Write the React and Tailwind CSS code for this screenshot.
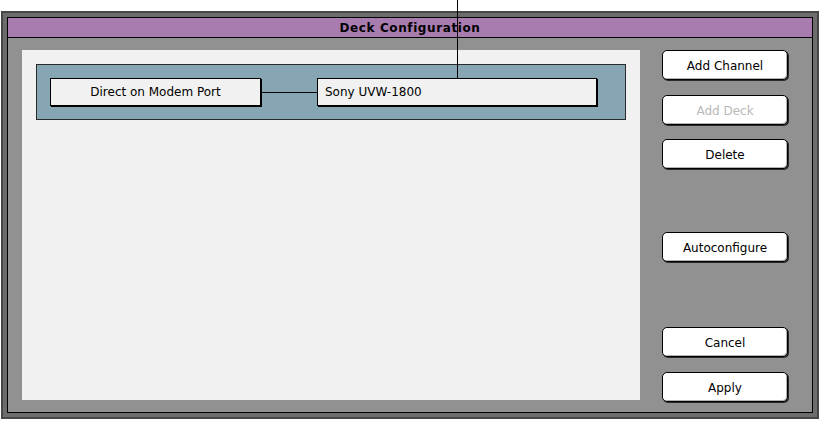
import React from "react";

const buttons = [
  { label: "Add Channel", top: "mt-0" },
  { label: "Add Deck", top: "mt-[15px]", disabled: true },
  { label: "Delete", top: "mt-[14px]" },
  { label: "Autoconfigure", top: "mt-[63px]" },
  { label: "Cancel", top: "mt-[65px]" },
  { label: "Apply", top: "mt-[15px]" },
];

function MacButton({ label, disabled, top }) {
  return (
    <button
      className={`${top} h-[30px] w-[126px] rounded-[5px] border border-black bg-white pt-[1px] text-[12px] shadow-[inset_-1px_-1px_0_#b5b5b5,1px_1px_0_#2a2a2a] ${
        disabled ? "text-[#b8b8b8]" : "text-black"
      }`}
    >
      {label}
    </button>
  );
}

export default function App() {
  return (
    <div className="relative h-[424px] w-[821px] bg-white font-['DejaVu_Sans',sans-serif] text-black">
      <div className="pt-[11px] pl-[1px]">
        {/* window frame */}
        <div className="w-[818px] border-2 border-[#474747] bg-[#6c6c6c] p-[4px]">
          <div className="border border-black">
            {/* title bar */}
            <div className="flex h-[20px] items-center justify-center border-b border-black bg-[#a87caf] text-[12px] font-bold tracking-[0.6px]">
              Deck Configuration
            </div>

            {/* body */}
            <div className="flex h-[374px] bg-[#919191] pt-[12px] pl-[14px]">
              {/* canvas */}
              <div className="h-[350px] w-[618px] bg-[#f1f1f1] pt-[14px] pl-[14px]">
                <div className="flex h-[56px] w-[590px] items-center border border-[#2a2a2a] bg-[#87a6b4] pl-[13px]">
                  <div className="flex h-[28px] w-[211px] items-center justify-center border border-black bg-[#f1f1f1] text-[12px] shadow-[1px_1px_0_#000]">
                    Direct on Modem Port
                  </div>
                  <div className="h-[1px] w-[56px] bg-black" />
                  <div className="flex h-[28px] w-[280px] items-center border border-black bg-[#f1f1f1] pl-[7px] text-[12px] shadow-[1px_1px_0_#000]">
                    Sony UVW-1800
                  </div>
                </div>
              </div>

              {/* button column */}
              <div className="ml-[22px] flex flex-col">
                {buttons.map((b) => (
                  <MacButton key={b.label} {...b} />
                ))}
              </div>
            </div>
          </div>
        </div>
      </div>

      {/* pointer line over the title bar */}
      <div className="absolute left-[457px] top-0 h-[78px] w-[1px] bg-black" />
    </div>
  );
}
